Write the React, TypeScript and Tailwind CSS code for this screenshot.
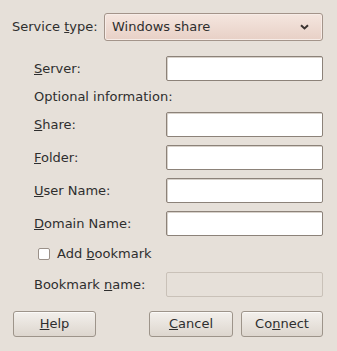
import React from 'react';

const font = { fontFamily: '"DejaVu Sans", "Liberation Sans", sans-serif' };

const Field = ({ disabled = false }: { disabled?: boolean }) => (
  <input
    type="text"
    disabled={disabled}
    className={
      disabled
        ? 'w-[157px] h-[25px] rounded-[2px] border border-[#c9c1b8] bg-[#e6e0d9] outline-none'
        : 'w-[157px] h-[25px] rounded-[2px] border border-[#8c8279] bg-white shadow-[inset_1px_1px_0_#d8d2cb] outline-none'
    }
  />
);

const Row = ({ label }: { label: React.ReactNode }) => (
  <div className="flex items-center justify-between h-[25px]">
    <span>{label}</span>
    <Field />
  </div>
);

const Button = ({ children, w }: { children: React.ReactNode; w: string }) => (
  <button
    className={`${w} h-[26px] rounded-[3px] border border-[#9d948a] bg-linear-to-b from-[#f3f0ec] to-[#ddd6ce] shadow-[inset_0_1px_0_#fbfaf8] text-[#2e2e2e]`}
  >
    {children}
  </button>
);

export default function App() {
  return (
    <div
      className="w-[337px] h-[351px] bg-[#e6e0d9] text-[#2e2e2e] text-[13px] pl-[12px] pr-[14px] pt-[13px]"
      style={font}
    >
      <div className="flex items-center h-[28px]">
        <span className="w-[92px]">
          Service <u>t</u>ype:
        </span>
        <div className="flex-1 h-[28px] flex items-center justify-between rounded-[3px] border border-[#a3948a] bg-linear-to-b from-[#f5e6df] to-[#e8d0c6] shadow-[inset_0_0_0_1px_#f7ece7] pl-[7px] pr-[13px]">
          <span>Windows share</span>
          <svg width="9" height="6" viewBox="0 0 9 6">
            <path d="M1 1.2 L4.5 4.5 L8 1.2" fill="none" stroke="#3a3330" strokeWidth="2" />
          </svg>
        </div>
      </div>

      <div className="pl-[22px] mt-[15px] flex flex-col">
        <Row label={<><u>S</u>erver:</>} />
        <div className="h-[31px] flex items-center">Optional information:</div>
        <div className="flex flex-col gap-[8px]">
          <Row label={<><u>S</u>hare:</>} />
          <Row label={<><u>F</u>older:</>} />
          <Row label={<><u>U</u>ser Name:</>} />
          <Row label={<><u>D</u>omain Name:</>} />
        </div>
        <div className="h-[36px] flex items-center pl-[4px] gap-[7px]">
          <input
            type="checkbox"
            className="appearance-none w-[12px] h-[12px] rounded-[2px] border border-[#9b9189] bg-white"
          />
          <span>
            Add <u>b</u>ookmark
          </span>
        </div>
        <div className="flex items-center justify-between h-[25px]">
          <span>
            Bookmark <u>n</u>ame:
          </span>
          <Field disabled />
        </div>
      </div>

      <div className="flex items-center mt-[14px] pl-[1px]">
        <Button w="w-[83px]">
          <u>H</u>elp
        </Button>
        <div className="flex-1" />
        <div className="flex gap-[8px]">
          <Button w="w-[84px]">
            <u>C</u>ancel
          </Button>
          <Button w="w-[82px]">
            Co<u>n</u>nect
          </Button>
        </div>
      </div>
    </div>
  );
}
